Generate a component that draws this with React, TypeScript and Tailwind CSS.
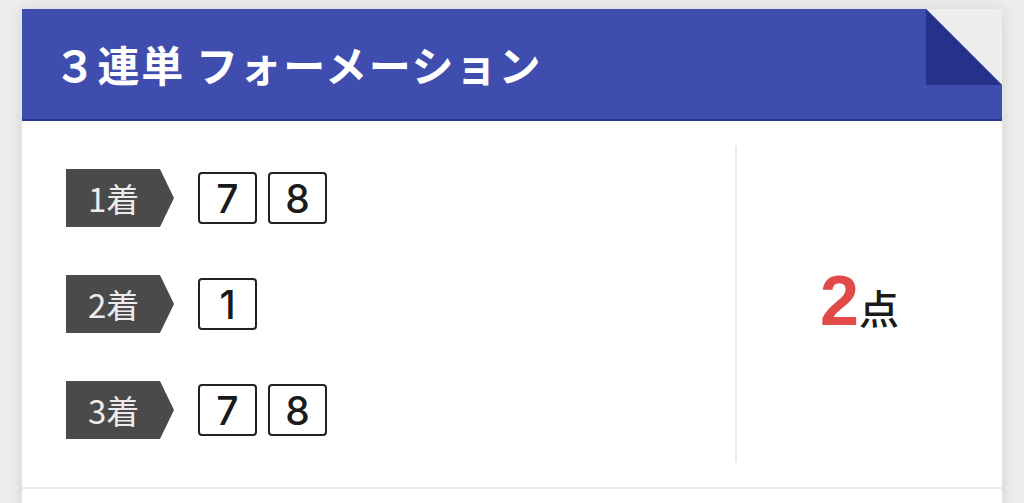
const rows = [
  { label: "1", nums: ["7", "8"] },
  { label: "2", nums: ["1"] },
  { label: "3", nums: ["7", "8"] },
];

function Place({ n }: { n: string }) {
  return (
    <div className="flex h-[58px] w-[108px] items-center bg-[#4a4a4a] pl-[22px] text-[33px] font-normal leading-none text-[#ececec] [clip-path:polygon(0_0,87%_0,100%_50%,87%_100%,0_100%)]">
      {n}着
    </div>
  );
}

function NumBox({ n }: { n: string }) {
  return (
    <div className="flex h-[52px] w-[59px] items-center justify-center rounded-[4px] border-2 border-[#222] font-['Inter',sans-serif] text-[39px] font-medium leading-none text-[#1a1a1a]">
      {n}
    </div>
  );
}

export default function App() {
  return (
    <div className="min-h-screen bg-[#eeeeee] px-[22px] pt-[9px] font-['Noto_Sans_CJK_JP','Noto_Sans',sans-serif]">
      <div className="relative w-[980px] bg-white shadow-[0_0_18px_rgba(0,0,0,0.12)]">
        <div className="flex h-[112px] items-center border-b-2 border-[#2a3794] bg-[#3f4eae] pl-[32px]">
          <h1 className="text-[42px] font-bold leading-none tracking-[1.6px] text-white">
            ３連単 フォーメーション
          </h1>
        </div>
        <svg
          className="absolute right-0 top-0"
          width="76"
          height="76"
          viewBox="0 0 76 76"
        >
          <polygon points="0,0 76,0 76,76" fill="#eeeeee" />
          <polygon points="0,0 0,76 76,76" fill="#25318a" />
        </svg>

        <div className="flex h-[366px]">
          <div className="flex w-[713px] flex-col gap-[48px] pl-[44px] pt-[48px]">
            {rows.map((r) => (
              <div key={r.label} className="flex items-center">
                <Place n={r.label} />
                <div className="ml-[24px] flex gap-[11px]">
                  {r.nums.map((x, i) => (
                    <NumBox key={i} n={x} />
                  ))}
                </div>
              </div>
            ))}
          </div>
          <div className="my-[25px] w-[2px] bg-[#ebebeb]" />
          <div className="flex flex-1 items-center justify-center pb-[6px] pr-[20px]">
            <span className="font-['Liberation_Sans',sans-serif] text-[70px] font-bold leading-none text-[#e24a4a]">
              2
            </span>
            <span className="mt-[12px] text-[40px] font-medium leading-none text-[#1a1a1a]">
              点
            </span>
          </div>
        </div>
        <div className="h-[2px] bg-[#ebebeb]" />
        <div className="h-[20px]" />
      </div>
    </div>
  );
}
